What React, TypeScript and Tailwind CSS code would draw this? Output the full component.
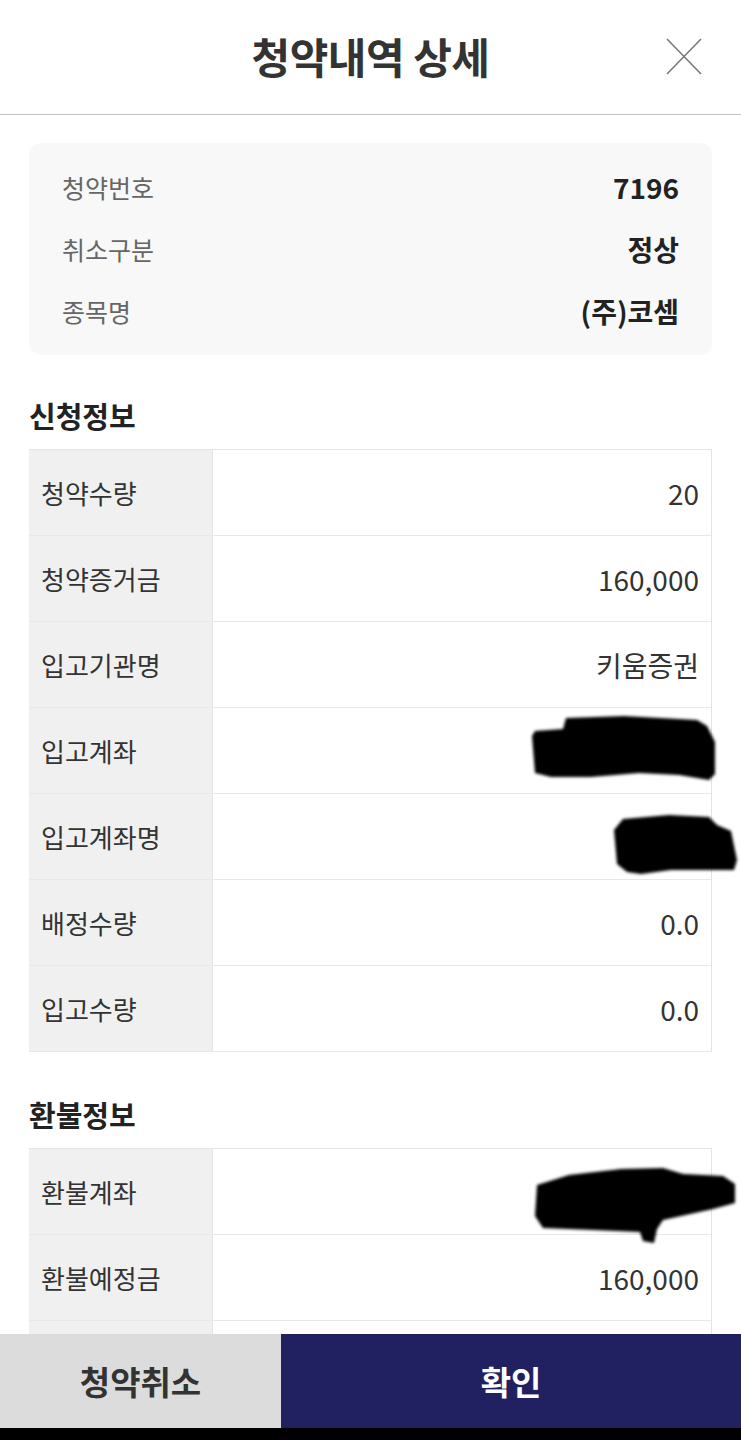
import React from "react";

interface Row {
    label: string;
    value?: string;
    blot?: "account" | "name" | "refund";
}

const applyRows: Row[] = [
    { label: "청약수량", value: "20" },
    { label: "청약증거금", value: "160,000" },
    { label: "입고기관명", value: "키움증권" },
    { label: "입고계좌", blot: "account" },
    { label: "입고계좌명", blot: "name" },
    { label: "배정수량", value: "0.0" },
    { label: "입고수량", value: "0.0" },
];

const refundRows: Row[] = [
    { label: "환불계좌", blot: "refund" },
    { label: "환불예정금", value: "160,000" },
    { label: "", value: "" },
];

// redaction marks drawn over the masked values
function Blot({ kind }: { kind: "account" | "name" | "refund" }) {
    if (kind === "account") {
        return (
            <svg className="absolute left-[500px] top-[4px]" width="190" height="72" viewBox="0 0 190 72">
                <filter id="b1"><feGaussianBlur stdDeviation="1.4" /></filter>
                <path filter="url(#b1)" fill="#050505" d="M3 24 L6 19 L34 17 L37 6 L95 4 L168 8 L178 14 L186 30 L186 62 L180 68 L150 63 L110 61 L62 65 L22 65 L6 61 Z" />
            </svg>
        );
    }
    if (kind === "name") {
        return (
            <svg className="absolute left-[580px] top-[16px]" width="132" height="68" viewBox="0 0 132 68">
                <filter id="b2"><feGaussianBlur stdDeviation="1.4" /></filter>
                <path filter="url(#b2)" fill="#050505" d="M5 20 L14 9 L60 5 L100 7 L108 15 L122 21 L128 50 L125 60 L62 60 L32 64 L18 62 L8 54 Z" />
            </svg>
        );
    }
    return (
        <svg className="absolute left-[502px] top-[14px]" width="210" height="84" viewBox="0 0 210 84">
            <filter id="b3"><feGaussianBlur stdDeviation="1.5" /></filter>
            <path filter="url(#b3)" fill="#050505" d="M6 22 L38 12 L90 6 L132 5 L152 11 L192 13 L204 21 L204 40 L182 46 L132 57 L126 66 L123 80 L112 78 L109 69 L62 67 L12 65 L4 53 Z" />
        </svg>
    );
}

function InfoTable({ rows }: { rows: Row[] }) {
    return (
        <div className="border-t border-r border-[#e4e4e4]">
            {rows.map((row, i) => (
                <div key={i} className="relative grid grid-cols-[184px_1fr] h-[86px] border-b border-[#e8e8e8]">
                    <div className="bg-[#f0f0f0] border-r border-[#e4e4e4] flex items-center pl-[12px] text-[26px] text-[#333]">
                        {row.label}
                    </div>
                    <div className="flex items-center justify-end pr-[12px] text-[28px] text-[#333]">
                        {row.value}
                    </div>
                    {row.blot && <Blot kind={row.blot} />}
                </div>
            ))}
        </div>
    );
}

export default function App() {
    return (
        <div className="h-[1440px] w-full flex flex-col bg-white overflow-hidden font-['Noto_Sans_CJK_KR','Noto_Sans',sans-serif] leading-none">
            <header className="h-[115px] shrink-0 border-b border-[#c4c4c4] grid grid-cols-[1fr_auto_1fr] items-center">
                <div />
                <h1 className="text-[42px] font-bold text-[#333] tracking-[-0.5px] pb-[2px]">청약내역 상세</h1>
                <div className="flex justify-end pr-[39px]">
                    <svg width="36" height="37" viewBox="0 0 36 37" className="mb-[2px]">
                        <line x1="1" y1="1" x2="35" y2="36" stroke="#7a7a7a" strokeWidth="1.6" />
                        <line x1="35" y1="1" x2="1" y2="36" stroke="#7a7a7a" strokeWidth="1.6" />
                    </svg>
                </div>
            </header>

            <main className="flex-1 overflow-hidden px-[29px] pt-[28px]">
                <div className="bg-[#f8f8f8] rounded-[12px] px-[33px] py-[13px]">
                    <div className="h-[62px] flex items-center justify-between">
                        <span className="text-[25px] text-[#666]">청약번호</span>
                        <span className="text-[28px] font-semibold text-[#222]">7196</span>
                    </div>
                    <div className="h-[62px] flex items-center justify-between">
                        <span className="text-[25px] text-[#666]">취소구분</span>
                        <span className="text-[28px] font-semibold text-[#222]">정상</span>
                    </div>
                    <div className="h-[62px] flex items-center justify-between">
                        <span className="text-[25px] text-[#666]">종목명</span>
                        <span className="text-[28px] font-semibold text-[#222]">(주)코셈</span>
                    </div>
                </div>

                <h2 className="mt-[42px] mb-[16px] h-[36px] flex items-center text-[29px] font-bold text-[#222]">신청정보</h2>
                <InfoTable rows={applyRows} />

                <h2 className="mt-[44px] mb-[16px] h-[36px] flex items-center text-[29px] font-bold text-[#222]">환불정보</h2>
                <InfoTable rows={refundRows} />
            </main>

            <footer className="h-[94px] shrink-0 grid grid-cols-[281px_1fr]">
                <button className="bg-[#dcdcdc] text-[33px] font-bold text-[#333]">청약취소</button>
                <button className="bg-[#212161] text-[33px] font-bold text-white">확인</button>
            </footer>
            <div className="h-[12px] shrink-0 bg-black" />
        </div>
    );
}
